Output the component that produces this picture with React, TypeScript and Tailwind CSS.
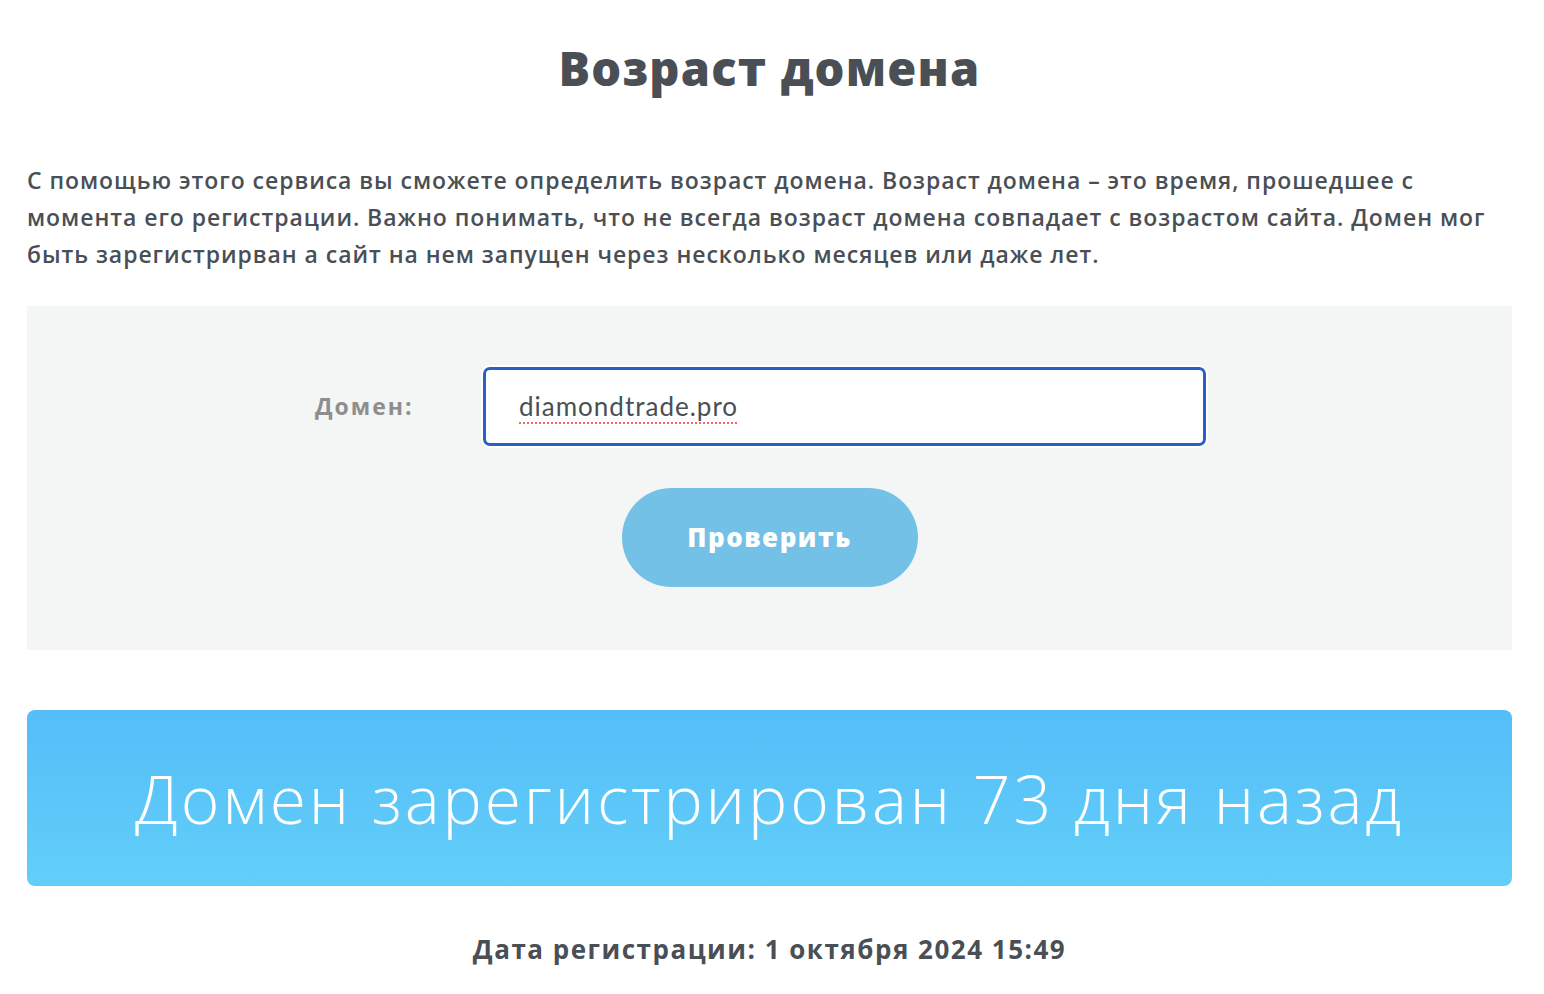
export default function App() {
  const font = { fontFamily: '"Open Sans", "Noto Sans", sans-serif' }
  return (
    <div className="min-h-screen bg-white text-[#4a4f55]" style={font}>
      <div className="pl-[27px] pr-[32px] pt-[38px] pb-10">
        <h1 className="text-center text-[47px] leading-[60px] font-extrabold tracking-[1.2px] text-[#4a4f55]">
          Возраст домена
        </h1>

        <p className="mt-[64px] text-[23px] leading-[37px] font-semibold tracking-[0.95px] whitespace-nowrap">
          С помощью этого сервиса вы сможете определить возраст домена. Возраст домена – это время, прошедшее с
          <br />
          момента его регистрации. Важно понимать, что не всегда возраст домена совпадает с возрастом сайта. Домен мог
          <br />
          быть зарегистрирван а сайт на нем запущен через несколько месяцев или даже лет.
        </p>

        <div className="mt-[33px] h-[344px] bg-[#f4f5f5] flex flex-col items-center pt-[61px]">
          <div className="flex items-center ml-[-18px]">
            <label className="w-[168px] text-[23px] font-bold tracking-[2px] text-[#8e8e8e]">Домен:</label>
            <div className="w-[723px] h-[79px] rounded-[7px] border-[3px] border-[#2a5fc6] bg-white ring-2 ring-white flex items-center px-[33px]">
              <span
                className="text-[26px] tracking-[1px] text-[#4a4f55] underline decoration-dotted decoration-[#ef6b5f] decoration-2 underline-offset-[6px]"
                style={{ fontFamily: 'Lato, "Open Sans", sans-serif' }}
              >
                diamondtrade.pro
              </span>
            </div>
          </div>
          <button className="mt-[42px] w-[296px] h-[99px] rounded-full bg-[#73c1e7] text-white text-[26px] font-extrabold tracking-[1.5px]">
            Проверить
          </button>
        </div>

        <div className="mt-[60px] h-[176px] rounded-[8px] bg-gradient-to-b from-[#55bdf8] to-[#62cff9] flex items-center justify-center">
          <span className="text-white text-[66px] font-light tracking-[2.85px]">Домен зарегистрирован 73 дня назад</span>
        </div>

        <p className="mt-[44px] text-center text-[26px] font-bold tracking-[1.5px] text-[#4a4f55]">
          Дата регистрации: 1 октября 2024 15:49
        </p>
      </div>
    </div>
  )
}
